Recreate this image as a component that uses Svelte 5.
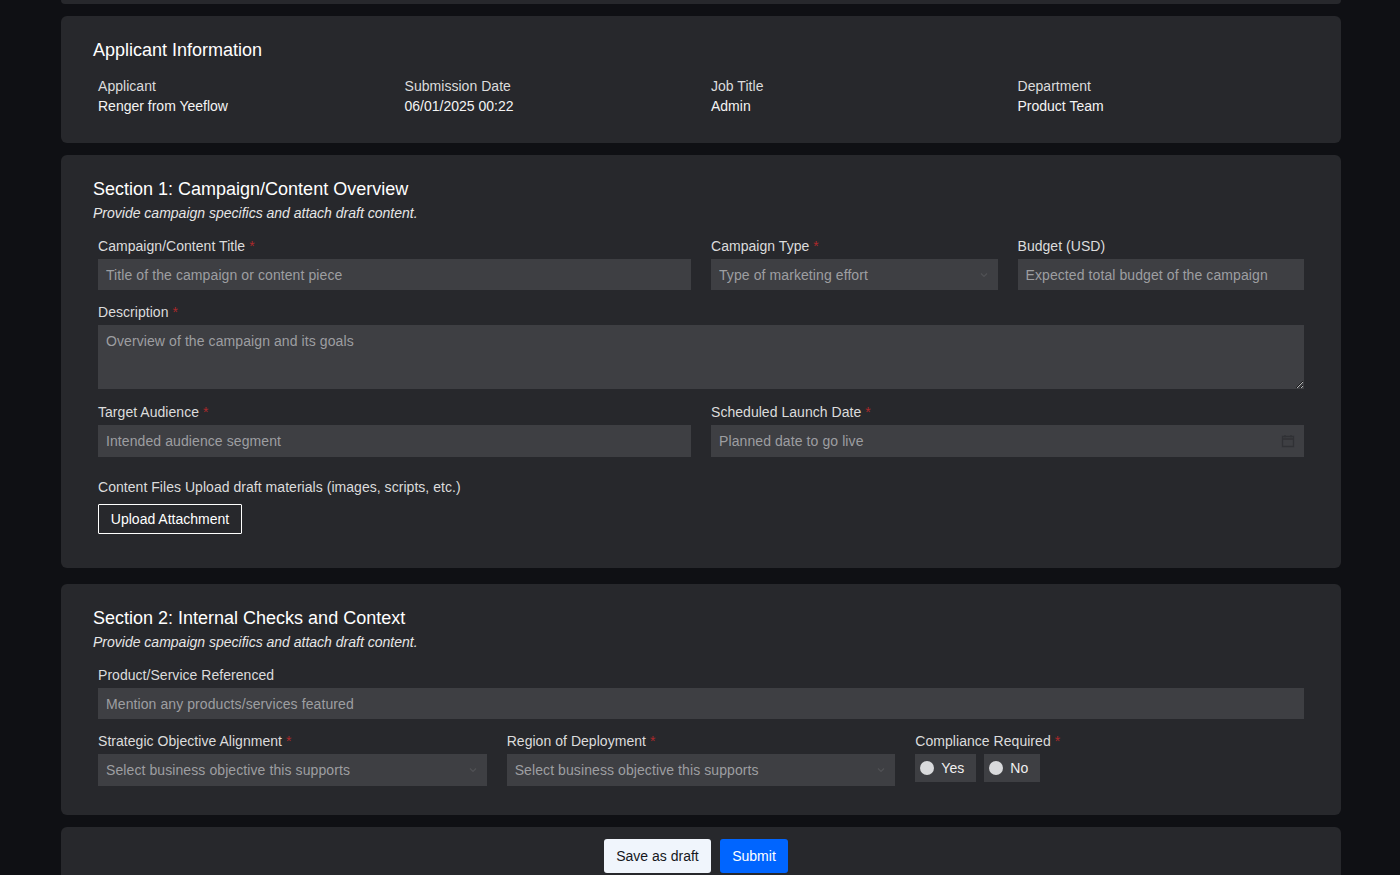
<script lang="ts">
	const applicant = [
		{ label: 'Applicant', value: 'Renger from Yeeflow' },
		{ label: 'Submission Date', value: '06/01/2025 00:22' },
		{ label: 'Job Title', value: 'Admin' },
		{ label: 'Department', value: 'Product Team' }
	];
	const objective = 'Select business objective this supports';
</script>

{#snippet chevron()}
	<svg class="chevron" width="10" height="10" viewBox="0 0 10 10" aria-hidden="true">
		<path d="M2 3.5 5 6.5 8 3.5" fill="none" stroke="currentColor" stroke-width="1.2" />
	</svg>
{/snippet}

<div class="page">
	<div class="card stub"></div>

	<section class="card info">
		<h2>Applicant Information</h2>
		<div class="grid four">
			{#each applicant as item}
				<div>
					<div class="label">{item.label}</div>
					<div class="value">{item.value}</div>
				</div>
			{/each}
		</div>
	</section>

	<section class="card overview">
		<h2>Section 1: Campaign/Content Overview</h2>
		<p class="hint">Provide campaign specifics and attach draft content.</p>
		<div class="grid four">
			<div class="field span2">
				<div class="label">Campaign/Content Title <span class="req">*</span></div>
				<input placeholder="Title of the campaign or content piece" />
			</div>
			<div class="field">
				<div class="label">Campaign Type <span class="req">*</span></div>
				<div class="control">
					<select>
						<option>Type of marketing effort</option>
					</select>
					{@render chevron()}
				</div>
			</div>
			<div class="field">
				<div class="label">Budget (USD)</div>
				<input placeholder="Expected total budget of the campaign" />
			</div>
			<div class="field span4">
				<div class="label">Description <span class="req">*</span></div>
				<textarea placeholder="Overview of the campaign and its goals"></textarea>
			</div>
			<div class="field span2 tall">
				<div class="label">Target Audience <span class="req">*</span></div>
				<input placeholder="Intended audience segment" />
			</div>
			<div class="field span2 tall">
				<div class="label">Scheduled Launch Date <span class="req">*</span></div>
				<div class="control">
					<input placeholder="Planned date to go live" />
					<svg class="calendar" width="14" height="14" viewBox="0 0 14 14" aria-hidden="true">
						<path
							d="M1.5 2.5h11v10h-11zM1.5 5h11M4 1v2.5M10 1v2.5"
							fill="none"
							stroke="currentColor"
							stroke-width="1.3"
						/>
					</svg>
				</div>
			</div>
		</div>
		<div class="label files">Content Files Upload draft materials (images, scripts, etc.)</div>
		<button class="upload">Upload Attachment</button>
	</section>

	<section class="card checks">
		<h2>Section 2: Internal Checks and Context</h2>
		<p class="hint">Provide campaign specifics and attach draft content.</p>
		<div class="field">
			<div class="label">Product/Service Referenced</div>
			<input placeholder="Mention any products/services featured" />
		</div>
		<div class="grid three">
			<div class="field">
				<div class="label">Strategic Objective Alignment <span class="req">*</span></div>
				<div class="control tall-control">
					<select>
						<option>{objective}</option>
					</select>
					{@render chevron()}
				</div>
			</div>
			<div class="field">
				<div class="label">Region of Deployment <span class="req">*</span></div>
				<div class="control tall-control">
					<select>
						<option>{objective}</option>
					</select>
					{@render chevron()}
				</div>
			</div>
			<div class="field">
				<div class="label">Compliance Required <span class="req">*</span></div>
				<div class="radios">
					<div class="radio"><span class="dot"></span>Yes</div>
					<div class="radio"><span class="dot"></span>No</div>
				</div>
			</div>
		</div>
	</section>

	<div class="card actions">
		<button class="draft">Save as draft</button>
		<button class="submit">Submit</button>
	</div>
</div>

<style>
	:global(body) {
		margin: 0;
		background: #0f1014;
		overflow: hidden;
	}
	.page {
		height: 875px;
		overflow: hidden;
		box-sizing: border-box;
		padding-left: 61px;
		width: 1341px;
		display: flex;
		flex-direction: column;
		font-family: 'Liberation Sans', Arial, sans-serif;
		font-size: 14px;
		line-height: 20px;
		letter-spacing: 0.04px;
		color: #fff;
	}
	.card {
		flex: none;
		background: #27282c;
		border-radius: 6px;
		box-sizing: border-box;
		padding: 0 37px 0 32px;
	}
	.stub {
		height: 4px;
		border-radius: 0 0 6px 6px;
		margin-bottom: 12px;
	}
	.info {
		height: 127px;
		padding-top: 22px;
		margin-bottom: 12px;
	}
	.overview {
		height: 413px;
		padding-top: 22px;
		margin-bottom: 16px;
	}
	.checks {
		height: 231px;
		padding-top: 22px;
		margin-bottom: 12px;
	}
	.actions {
		height: 60px;
		padding: 12px 42px 0 32px;
		display: flex;
		justify-content: center;
		align-items: flex-start;
		gap: 9px;
	}
	h2 {
		margin: 0;
		font-size: 18px;
		font-weight: 400;
		line-height: 24px;
		letter-spacing: 0;
	}
	.info h2 {
		margin-bottom: 14px;
	}
	.hint {
		margin: 2px 0 13px;
		font-style: italic;
		letter-spacing: 0;
		color: #e6e6e6;
	}
	.grid {
		display: grid;
		column-gap: 20px;
		row-gap: 12px;
		margin-left: 5px;
	}
	.four {
		grid-template-columns: repeat(4, 1fr);
	}
	.three {
		grid-template-columns: repeat(3, 1fr);
		margin-top: 12px;
	}
	.checks > .field {
		margin-left: 5px;
	}
	.span2 {
		grid-column: span 2;
	}
	.span4 {
		grid-column: span 4;
	}
	.label {
		color: #dcdcdc;
	}
	.value {
		color: #f4f4f4;
		letter-spacing: 0;
	}
	.field .label {
		margin-bottom: 3px;
	}
	.req {
		color: #ab282b;
	}
	input,
	select,
	textarea {
		display: block;
		width: 100%;
		box-sizing: border-box;
		height: 31px;
		padding: 0 8px;
		border: 0;
		border-radius: 0;
		outline: 0;
		margin: 0;
		background: #3e3f43;
		font: inherit;
		letter-spacing: 0.09px;
		color: #9d9ea1;
		appearance: none;
	}
	.tall input,
	.tall-control select {
		height: 32px;
	}
	textarea {
		height: 64px;
		padding: 6px 8px;
		resize: vertical;
		margin-bottom: 1px;
	}
	::placeholder {
		color: #9d9ea1;
		opacity: 1;
	}
	.control {
		position: relative;
	}
	.chevron {
		position: absolute;
		right: 9px;
		top: 11px;
		color: #505155;
	}
	.calendar {
		position: absolute;
		right: 9px;
		top: 9px;
		color: #303135;
	}
	.files {
		margin: 20px 0 7px 5px;
	}
	.upload {
		display: block;
		margin-left: 5px;
		width: 144px;
		height: 30px;
		padding: 0;
		background: transparent;
		border: 1px solid #fff;
		border-radius: 1px;
		font: inherit;
		color: #fff;
	}
	.radios {
		display: flex;
		gap: 8px;
	}
	.radio {
		display: flex;
		align-items: center;
		gap: 7px;
		height: 28px;
		padding: 0 12px 0 5px;
		background: #3e3f43;
		color: #f0f0f0;
	}
	.dot {
		width: 14px;
		height: 14px;
		border-radius: 50%;
		background: #d9dadc;
	}
	.draft,
	.submit {
		height: 34px;
		padding: 0;
		border: 0;
		border-radius: 3px;
		font: inherit;
	}
	.draft {
		width: 107px;
		background: #f0f5fc;
		color: #15171c;
	}
	.submit {
		width: 68px;
		background: #0065ff;
		color: #fff;
	}
</style>
